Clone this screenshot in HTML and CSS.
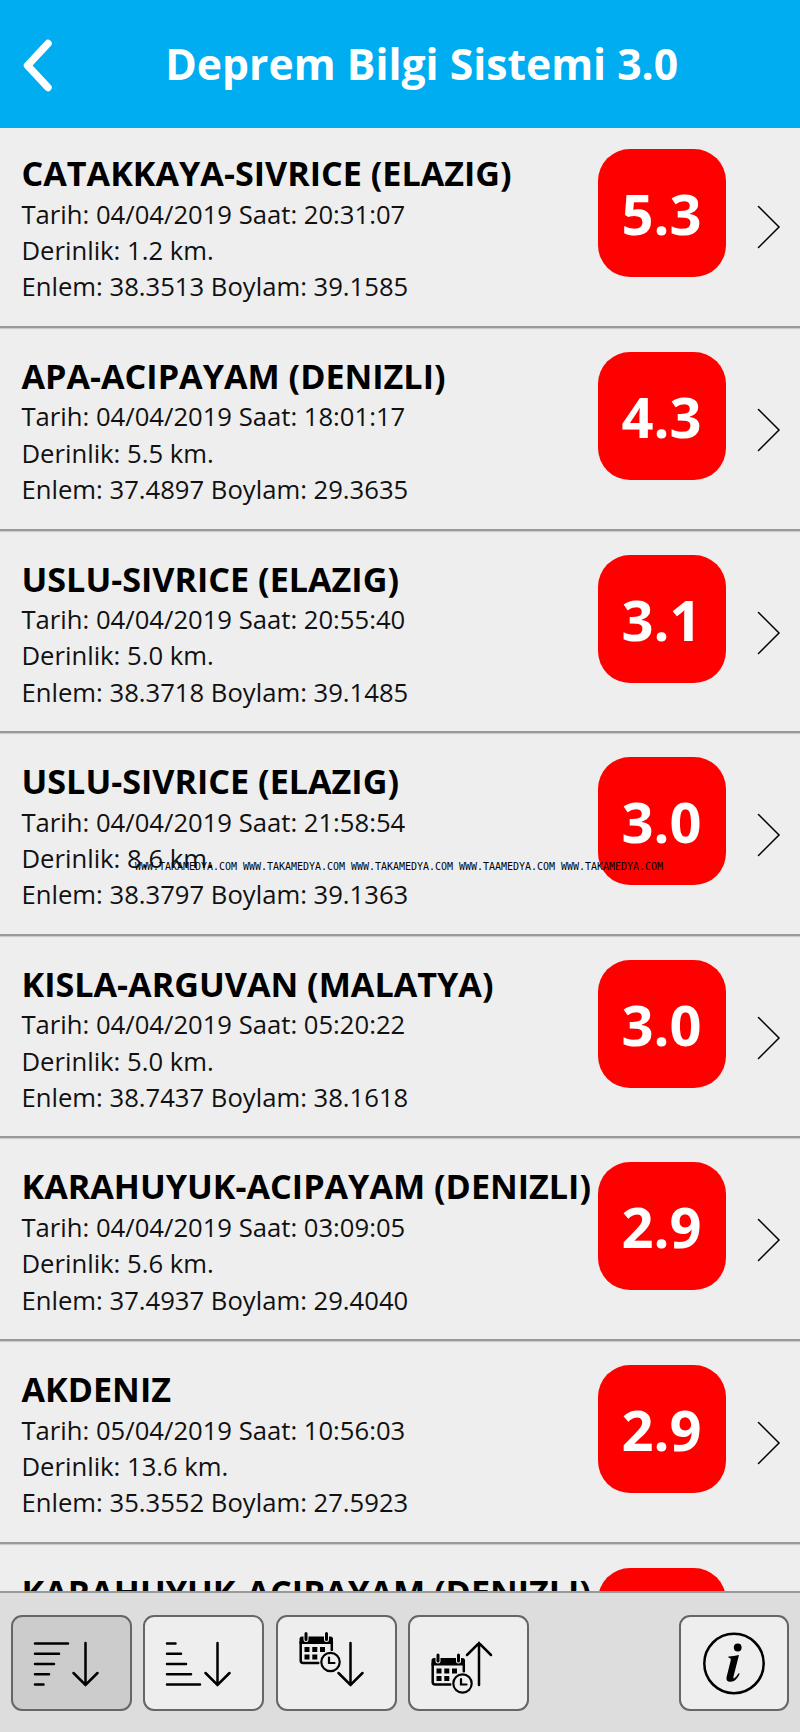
FILE: index.html
```
<!DOCTYPE html>
<html lang="tr">
<head>
    <meta charset="UTF-8">
    <meta name="viewport" content="width=device-width, initial-scale=1.0">
    <title>Deprem Bilgi Sistemi</title>
    <link rel="stylesheet" href="styles.css">
</head>
<body>
<header class="header">
    <svg class="back" width="30" height="54" viewBox="0 0 30 54"><path d="M25 4.500L4.500 26.500L25 48.500" /></svg>
    <h1>Deprem Bilgi Sistemi 3.0</h1>
</header>

<main class="list" id="list"></main>

<footer class="toolbar">
    <button class="active">
        <svg width="120" height="94" viewBox="0 0 120 94">
            <path d="M24 28.500H57M24 38.700H48M24 49H43M24 59.200H38M24 69.500H32.500" />
            <path d="M74.500 28V70M62.500 58L74.500 70L86.500 58" />
        </svg>
    </button>
    <button>
        <svg width="120" height="94" viewBox="0 0 120 94">
            <path d="M24 28.500H32.500M24 38.700H38M24 49H43M24 59.200H48M24 69.500H57" />
            <path d="M74.500 28V70M62.500 58L74.500 70L86.500 58" />
        </svg>
    </button>
    <button>
        <svg width="120" height="94" viewBox="0 0 120 94">
            <use href="#calendar" x="23.500" y="17" />
            <path d="M74.500 28V70M62.500 58L74.500 70L86.500 58" />
        </svg>
    </button>
    <button>
        <svg width="120" height="94" viewBox="0 0 120 94">
            <use href="#calendar" x="23.500" y="38.500" />
            <path d="M71 70V28M59 40L71 28L83 40" />
        </svg>
    </button>
    <button class="info">
        <svg width="110" height="94" viewBox="0 0 110 94">
            <circle cx="55" cy="47.500" r="29.700" />
            <circle class="fill" cx="58.700" cy="31.500" r="3.900" />
            <path class="fill" d="M49.500 40.500Q54.500 40.200 60 39L54.500 60.500Q54 62.800 55.300 62.300Q57.500 61 59.300 57.500L60.800 57.500Q57.500 65.500 51.500 65.800Q46.500 66 47.700 60.500L51.700 44.500Q52.200 42 49.500 41.800Z" />
        </svg>
    </button>
</footer>

<div class="watermark">WWW.TAKAMEDYA.COM WWW.TAKAMEDYA.COM WWW.TAKAMEDYA.COM WWW.TAAMEDYA.COM WWW.TAKAMEDYA.COM</div>

<svg class="defs" width="0" height="0">
    <symbol id="calendar" width="42" height="42" viewBox="0 0 42 42" overflow="visible">
        <path class="fill" d="M0 12V7Q0 4.500 2.500 4.500H31Q33.500 4.500 33.500 7V12Z" />
        <path class="frame" d="M1.200 10V28.500Q1.200 31 3.700 31H19M32.300 10V18" />
        <path class="ring" d="M6.500 1.500V7.500M27 1.500V7.500" />
        <path class="pin" d="M6.500 1.500V7.500M27 1.500V7.500" />
        <path class="fill" d="M5 15h5v5h-5zM12.800 15h5v5h-5zM20.500 15h5v5h-5zM5 22.500h5v5h-5zM12.800 22.500h5v5h-5z" />
        <circle class="clock-bg" cx="31" cy="30" r="11" />
        <circle class="clock" cx="31" cy="30" r="9.200" />
        <path class="hands" d="M29.500 25.500V31H35" />
    </symbol>
</svg>

<script>
  const quakes = [
    ["CATAKKAYA-SIVRICE (ELAZIG)", "04/04/2019", "20:31:07", "1.2", "38.3513", "39.1585", "5.3"],
    ["APA-ACIPAYAM (DENIZLI)", "04/04/2019", "18:01:17", "5.5", "37.4897", "29.3635", "4.3"],
    ["USLU-SIVRICE (ELAZIG)", "04/04/2019", "20:55:40", "5.0", "38.3718", "39.1485", "3.1"],
    ["USLU-SIVRICE (ELAZIG)", "04/04/2019", "21:58:54", "8.6", "38.3797", "39.1363", "3.0"],
    ["KISLA-ARGUVAN (MALATYA)", "04/04/2019", "05:20:22", "5.0", "38.7437", "38.1618", "3.0"],
    ["KARAHUYUK-ACIPAYAM (DENIZLI)", "04/04/2019", "03:09:05", "5.6", "37.4937", "29.4040", "2.9"],
    ["AKDENIZ", "05/04/2019", "10:56:03", "13.6", "35.3552", "27.5923", "2.9"],
    ["KARAHUYUK-ACIPAYAM (DENIZLI)", "", "", "", "", "", ""],
  ];
  const list = document.getElementById("list");

  for (const [place, date, time, depth, lat, lon, magnitude] of quakes) {
    const details = date
      ? `<p>Tarih: ${date} Saat: ${time}</p><p>Derinlik: ${depth} km.</p><p>Enlem: ${lat} Boylam: ${lon}</p>`
      : "";
    list.insertAdjacentHTML("beforeend", `
      <article class="row">
        <div class="text"><h2>${place}</h2>${details}</div>
        <div class="badge">${magnitude}</div>
        <svg class="arrow" width="24" height="44" viewBox="0 0 24 44"><path d="M1.500 1.500L22 22L1.500 42.500" /></svg>
      </article>`);
  }
</script>
</body>
</html>
```
FILE: styles.css
```
* {
    box-sizing: border-box;
}

body {
    font-family: "Open Sans", sans-serif;
    display: flex;
    flex-direction: column;
    height: 1732px;
    margin: 0;
    overflow: hidden;
    background-color: #eee;
    color: #000;
}

h1, h2, p {
    margin: 0;
}

svg {
    display: block;
    fill: none;
    stroke: #000;
    stroke-width: 2.5;
    stroke-linecap: round;
}

.header {
    display: flex;
    align-items: center;
    flex: none;
    height: 128px;
    padding-left: 22.500px;
    background-color: #00adf0;
    color: #fff;
}

.back {
    margin-top: 4px;
    stroke: #fff;
    stroke-width: 7.5;
    stroke-linejoin: round;
}

.header h1 {
    flex: 1;
    padding: 0 9px 1px 0;
    font-size: 42.700px;
    line-height: 60px;
    text-align: center;
}

.list {
    flex: 1;
    min-height: 0;
    padding-top: 21.200px;
    overflow: hidden;
}

.row {
    display: flex;
    height: 178.660px;
    margin-bottom: 24px;
    padding-left: 21.500px;
    border-bottom: 2px solid #999;
    box-shadow: 0 1px 1px #ccc;
}

.text {
    width: 576px;
    white-space: nowrap;
}

.text h2 {
    padding-bottom: 0.500px;
    font-size: 34.150px;
    line-height: 47px;
}

.text p {
    color: #111;
    font-size: 25.650px;
    line-height: 36.300px;
}

.badge {
    width: 128px;
    height: 128px;
    border-radius: 32px;
    background-color: #f00;
    color: #fff;
    font-size: 56px;
    font-weight: bold;
    line-height: 128px;
    text-align: center;
}

.arrow {
    margin: 56px 0 0 31px;
    stroke-width: 1.5;
}

.toolbar {
    display: flex;
    flex: none;
    gap: 11.300px;
    height: 141px;
    padding: 22px 11px 0;
    border-top: 2px solid #999;
    background-color: #ddd;
}

.toolbar button {
    display: flex;
    align-items: center;
    justify-content: center;
    width: 121px;
    height: 96px;
    padding: 0;
    border: 2px solid #666;
    border-radius: 11px;
    background-color: #eee;
}

.toolbar button svg {
    flex: none;
    margin: 0 1px 2.500px 0;
}

.toolbar .active {
    background-color: #ccc;
}

.toolbar .info {
    width: 110px;
    margin-left: auto;
}

.toolbar .info svg {
    margin: 0;
}

.fill {
    fill: #000;
    stroke: none;
}

.frame {
    stroke-width: 2.5;
}

.ring {
    stroke: #eee;
    stroke-width: 5;
}

.pin {
    stroke-width: 3;
}

.clock-bg {
    fill: #eee;
    stroke: none;
}

.clock, .hands {
    stroke-width: 2.2;
}

.watermark {
    position: absolute;
    top: 860px;
    left: 135px;
    font-family: "DejaVu Sans Mono", monospace;
    font-size: 10px;
    line-height: 14px;
    letter-spacing: -0.020px;
    white-space: nowrap;
}

.defs {
    position: absolute;
}
```
